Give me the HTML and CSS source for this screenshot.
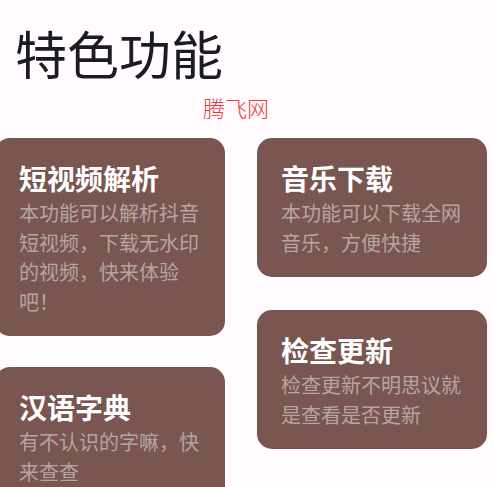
FILE: index.html
```html
<!DOCTYPE html>
<html lang="zh-CN">
  <head>
    <meta charset="UTF-8" />
    <meta name="viewport" content="width=device-width, initial-scale=1.0" />
    <title>特色功能</title>
    <link rel="stylesheet" href="styles.css">
  </head>
  <body>
    <header class="page-head">
      <h1>特色功能</h1>
      <p class="brand">腾飞网</p>
    </header>

    <main class="features">
      <div class="column">
        <div class="card">
          <h2>短视频解析</h2>
          <p>本功能可以解析抖音短视频，下载无水印的视频，快来体验吧！</p>
        </div>
        <div class="card">
          <h2>汉语字典</h2>
          <p>有不认识的字嘛，快来查查</p>
        </div>
      </div>
      <div class="column">
        <div class="card">
          <h2>音乐下载</h2>
          <p>本功能可以下载全网音乐，方便快捷</p>
        </div>
        <div class="card">
          <h2>检查更新</h2>
          <p>检查更新不明思议就是查看是否更新</p>
        </div>
      </div>
    </main>
  </body>
</html>
```

FILE: styles.css
```css
/* Reset minimal */
* {
  margin: 0;
  padding: 0;
  box-sizing: border-box;
}

body {
  font-family: "Noto Sans CJK SC", "Noto Sans", sans-serif;
  background-color: #fffbfe;
  color: #1c1b1f;
  overflow: hidden;
}

/* En-tête */
.page-head {
  padding: 15px 0 0 15px;
}
.page-head h1 {
  font-size: 52px;
  font-weight: 400;
  line-height: 1.45;
}
.brand {
  margin: 2px 0 0 188px;
  font-size: 22px;
  font-weight: 300;
  line-height: 1.45;
  color: #f03a3a;
}

/* Grille des cartes */
.features {
  display: flex;
  gap: 32px;
  margin: 14px 0 0 -5px;
  align-items: flex-start;
}

.column {
  display: flex;
  flex-direction: column;
  gap: 31px;
  width: 230px;
}
.column:last-child {
  gap: 33px;
}

.card {
  background: #795650;
  border-radius: 15px;
  padding: 20px 22px 20px 24px;
  color: #fff;
}
.card h2 {
  font-size: 28px;
  font-weight: 700;
  line-height: 40px;
}
.card p {
  font-size: 20px;
  line-height: 29.5px;
  color: rgba(255, 255, 255, 0.48);
}
```
